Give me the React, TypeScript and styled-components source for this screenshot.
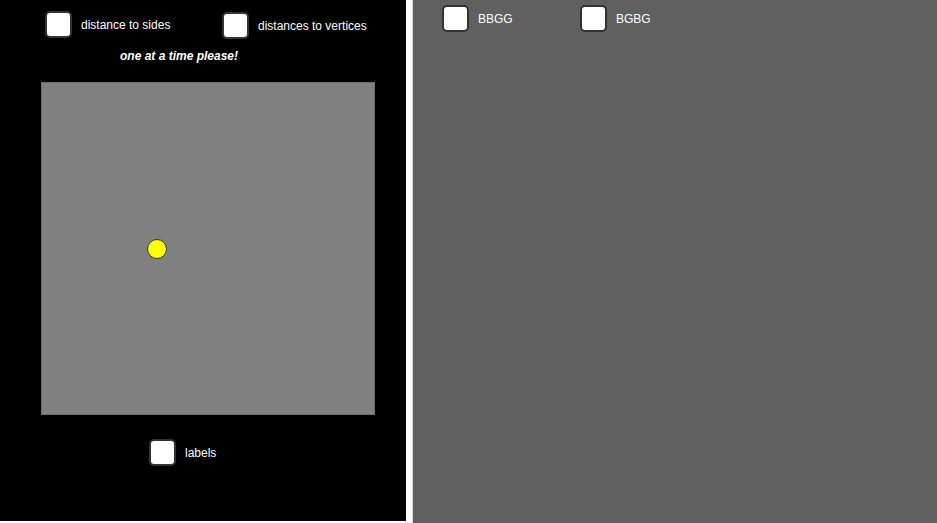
import React from 'react'
import styled, { createGlobalStyle } from 'styled-components'

const GlobalStyle = createGlobalStyle`
    html, body {
        margin: 0;
        padding: 0;
        background: #ffffff;
        font-family: 'Liberation Sans', Arial, sans-serif;
    }
`

const Page = styled.div`
    display: flex;
    width: 937px;
    height: 523px;
    overflow: hidden;
    background: #ffffff;
`

const LeftPanel = styled.section`
    width: 406px;
    height: 521px;
    background: #000000;
    display: flex;
    flex-direction: column;
    flex-shrink: 0;
`

const Divider = styled.div`
    width: 6px;
    background: #ffffff;
    border-right: 1px solid #d8d8d8;
    flex-shrink: 0;
`

const RightPanel = styled.section`
    flex: 1;
    height: 523px;
    background: #606060;
    display: flex;
    flex-direction: column;
`

const Row = styled.div<{ $left: number; $top: number }>`
    display: flex;
    align-items: center;
    padding-left: ${(p) => p.$left}px;
    margin-top: ${(p) => p.$top}px;
`

const Option = styled.label<{ $width?: number; $offset?: number }>`
    display: flex;
    align-items: center;
    gap: 9px;
    width: ${(p) => (p.$width ? `${p.$width}px` : 'auto')};
    margin-top: ${(p) => p.$offset ?? 0}px;
    color: #ffffff;
    font-size: 12px;
    cursor: pointer;
`

const Box = styled.span`
    box-sizing: border-box;
    width: 27px;
    height: 27px;
    background: #ffffff;
    border: 2px solid #333333;
    border-radius: 5px;
    flex-shrink: 0;
`

const Note = styled.div`
    margin-top: 10px;
    margin-left: 120px;
    color: #ffffff;
    font-size: 12px;
    font-weight: bold;
    font-style: italic;
`

const Board = styled.div`
    position: relative;
    box-sizing: border-box;
    width: 334px;
    height: 333px;
    margin: 19px 0 0 41px;
    background: #808080;
    border: 1px solid #6e6e6e;
`

const Dot = styled.div`
    position: absolute;
    left: 105px;
    top: 156px;
    box-sizing: border-box;
    width: 20px;
    height: 20px;
    border-radius: 50%;
    background: #ffff00;
    border: 1px solid #333333;
`

export default function App() {
    return (
        <Page>
            <GlobalStyle />
            <LeftPanel>
                <Row $left={45} $top={10}>
                    <Option $width={177}>
                        <Box />
                        distance to sides
                    </Option>
                    <Option $offset={2}>
                        <Box />
                        distances to vertices
                    </Option>
                </Row>
                <Note>one at a time please!</Note>
                <Board>
                    <Dot />
                </Board>
                <Row $left={149} $top={24}>
                    <Option>
                        <Box />
                        labels
                    </Option>
                </Row>
            </LeftPanel>
            <Divider />
            <RightPanel>
                <Row $left={29} $top={5}>
                    <Option $width={138}>
                        <Box />
                        BBGG
                    </Option>
                    <Option>
                        <Box />
                        BGBG
                    </Option>
                </Row>
            </RightPanel>
        </Page>
    )
}
